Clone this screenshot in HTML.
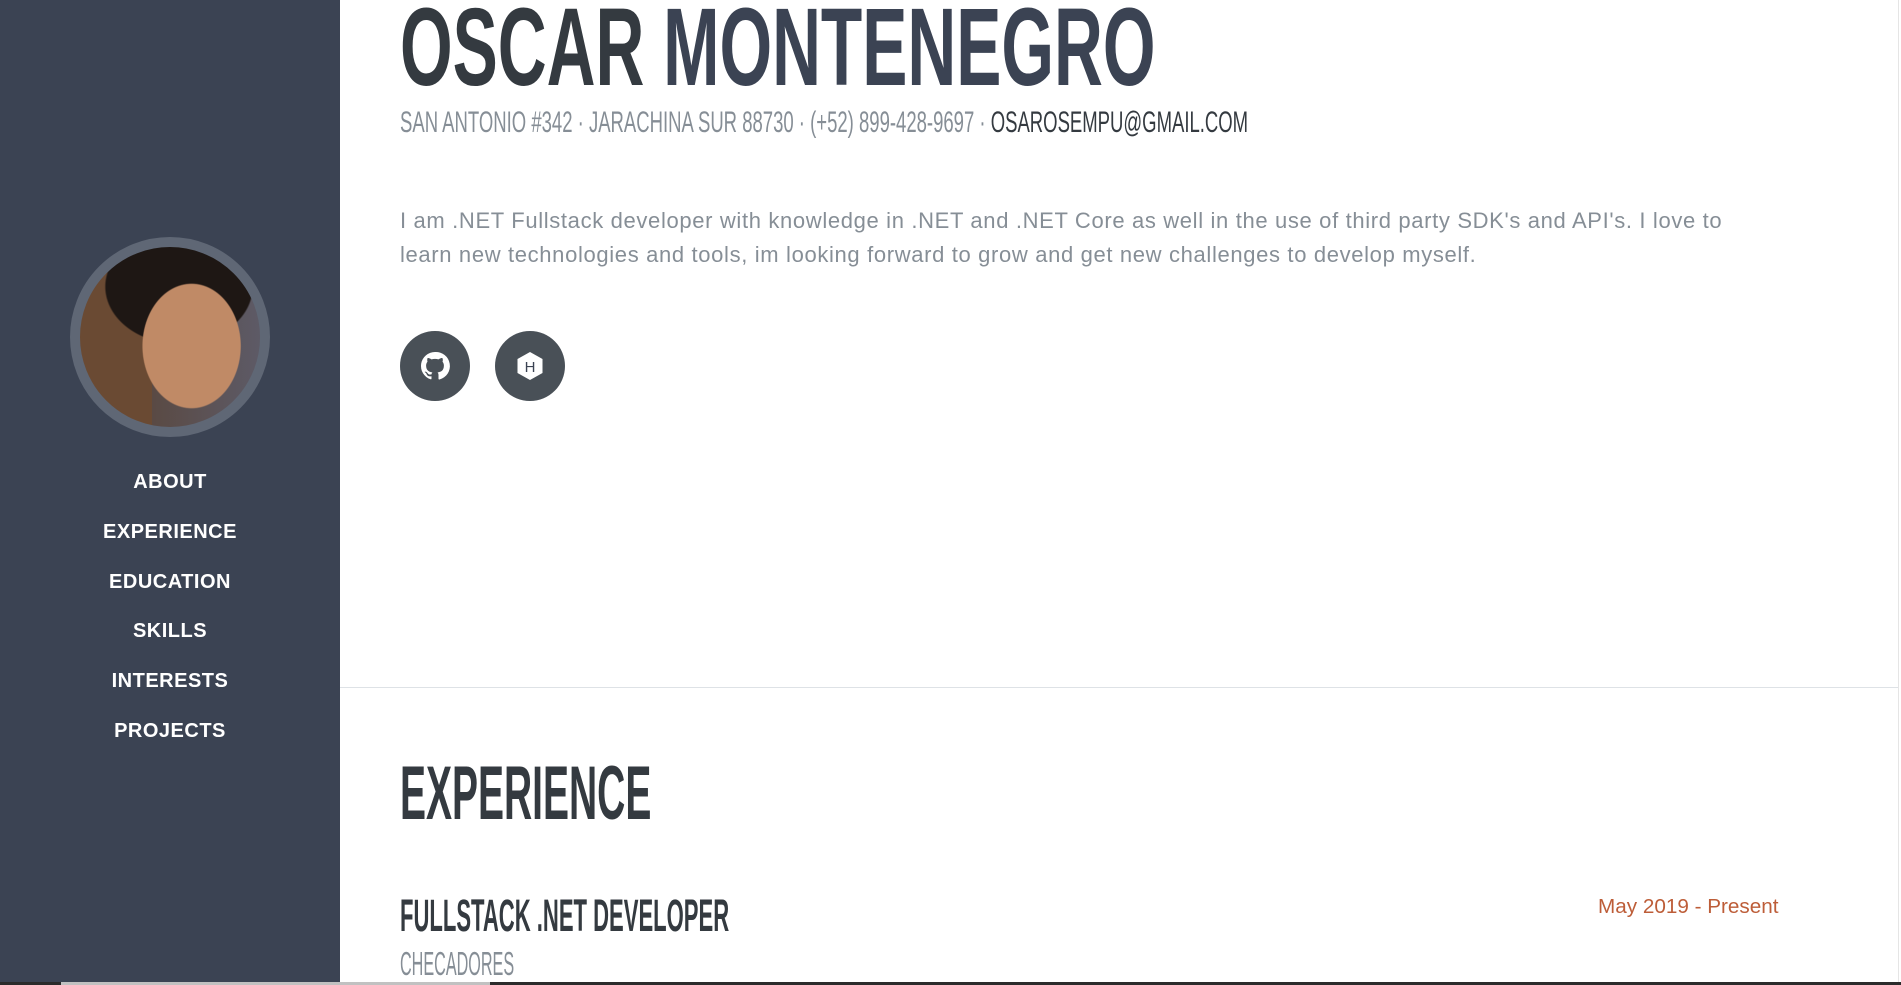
<!DOCTYPE html>
<html><head><meta charset="utf-8"><style>
*{margin:0;padding:0;box-sizing:border-box}
html,body{width:1901px;height:985px;overflow:hidden;background:#fff;font-family:"Liberation Sans",sans-serif}
#side{position:absolute;left:0;top:0;width:340px;height:985px;background:#3b4353}
.photo{position:absolute;left:70px;top:237px;width:200px;height:200px;border-radius:50%;border:10px solid #5f6775;overflow:hidden;background:radial-gradient(ellipse 30% 38% at 62% 55%,#c08a66 0 90%,transparent 92%),radial-gradient(ellipse 45% 35% at 55% 22%,#1e1714 0 90%,transparent 92%),linear-gradient(90deg,#6a4a33 0 40%,#5a4a44 40%,#5d5a66 100%)}
.nav{position:absolute;left:0;width:340px;text-align:center;color:#fff;font-weight:bold;font-size:20px;letter-spacing:0.5px}
.c{display:inline-block;transform-origin:0 0;white-space:nowrap}
.abs{position:absolute}
</style></head><body>
<div id="side">
 <div class="photo"></div>
 <div class="nav" style="top:471px">ABOUT</div>
 <div class="nav" style="top:521px">EXPERIENCE</div>
 <div class="nav" style="top:571px">EDUCATION</div>
 <div class="nav" style="top:620px">SKILLS</div>
 <div class="nav" style="top:670px">INTERESTS</div>
 <div class="nav" style="top:720px">PROJECTS</div>
</div>
<div class="abs" style="left:400px;top:-7px;font-size:110px;font-weight:bold;line-height:110px"><span class="c" style="transform:scaleX(0.615)"><span style="color:#343a40">OSCAR</span> <span style="color:#3b4353">MONTENEGRO</span></span></div>
<div class="abs" style="left:400px;top:107px;font-size:30px;line-height:32px;color:#868e96"><span class="c" style="transform:scaleX(0.617)">SAN ANTONIO #342 · JARACHINA SUR 88730 · (+52) 899-428-9697 · <span style="color:#343a40">OSAROSEMPU@GMAIL.COM</span></span></div>
<div class="abs" style="left:400px;top:204px;width:1480px;font-size:22px;letter-spacing:0.65px;line-height:34px;color:#868e96;white-space:nowrap">I am .NET Fullstack developer with knowledge in .NET and .NET Core as well in the use of third party SDK's and API's. I love to<br>learn new technologies and tools, im looking forward to grow and get new challenges to develop myself.</div>
<svg class="abs" style="left:400px;top:331px" width="70" height="70" viewBox="0 0 70 70"><circle cx="35" cy="35" r="35" fill="#495057"/><path fill="#fff" d="M35 21a14 14 0 0 0-4.4 27.3c.7.1.9-.3.9-.7v-2.4c-3.9.8-4.7-1.7-4.7-1.7-.6-1.6-1.5-2-1.5-2-1.3-.9.1-.9.1-.9 1.4.1 2.1 1.4 2.1 1.4 1.2 2.1 3.3 1.5 4.100 1.2.1-.9.5-1.5.9-1.8-3.1-.4-6.4-1.600-6.4-6.9 0-1.5.5-2.8 1.4-3.8-.1-.4-.6-1.8.1-3.7 0 0 1.2-.4 3.9 1.4a13 13 0 0 1 7 0c2.7-1.8 3.9-1.4 3.9-1.4.8 1.9.3 3.3.1 3.7.9 1 1.4 2.3 1.4 3.8 0 5.4-3.3 6.5-6.4 6.9.5.4 1 1.3 1 2.6v3.8c0 .4.2.8 1 .7A14 14 0 0 0 35 21z"/></svg>
<svg class="abs" style="left:495px;top:331px" width="70" height="70" viewBox="0 0 70 70"><circle cx="35" cy="35" r="35" fill="#495057"/><path fill="#fff" d="M35 21l12.5 7v14L35 49l-12.5-7V28z"/><text x="35" y="41" text-anchor="middle" font-family="Liberation Sans" font-size="15" fill="#3b4353">H</text></svg>
<div class="abs" style="left:340px;top:687px;width:1558px;height:1px;background:#dee2e6"></div>
<div class="abs" style="left:1898px;top:0;width:1px;height:985px;background:#e5e5e5"></div>
<div class="abs" style="left:400px;top:754px;font-size:76px;line-height:80px;font-weight:bold;color:#343a40"><span class="c" style="transform:scaleX(0.513)">EXPERIENCE</span></div>
<div class="abs" style="left:400px;top:893px;font-size:45px;line-height:46px;font-weight:bold;color:#343a40"><span class="c" style="transform:scaleX(0.49)">FULLSTACK .NET DEVELOPER</span></div>
<div class="abs" style="left:1598px;top:896px;font-size:20.7px;line-height:22px;color:#bd5d38">May 2019 - Present</div>
<div class="abs" style="left:400px;top:947px;font-size:33px;line-height:34px;color:#868e96"><span class="c" style="transform:scaleX(0.49)">CHECADORES</span></div>
<div class="abs" style="left:0;top:982px;width:1901px;height:3px;background:#2b2b2b"></div>
<div class="abs" style="left:61px;top:982px;width:429px;height:3px;background:#c1c1c1"></div>
</body></html>
